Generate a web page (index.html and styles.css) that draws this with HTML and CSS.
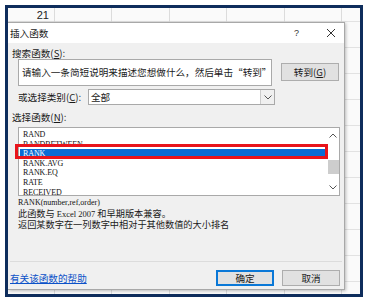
FILE: index.html
```html
<!DOCTYPE html>
<html>
<head>
<meta charset="utf-8">
<link rel="stylesheet" href="styles.css">
</head>
<body>
<div class="frame">
  <div class="toprow"><span class="cellnum">21</span></div>
  <div class="dialog">
    <div class="titlebar">
      <span class="title">插入函数</span>
      <span class="tbtns"><span class="help">?</span><span class="close">
        <svg width="10" height="10" viewBox="0 0 10 10"><path d="M1 1 L9 9 M9 1 L1 9" stroke="#333" stroke-width="1" fill="none"/></svg>
      </span></span>
    </div>
    <div class="body">
      <div class="label">搜索函数(<u>S</u>):</div>
      <div class="searchrow">
        <div class="searchbox">请输入一条简短说明来描述您想做什么，然后单击“转到”</div>
        <div class="btn gobtn">转到(<u>G</u>)</div>
      </div>
      <div class="catrow">
        <span class="catlabel">或选择类别(<u>C</u>):</span>
        <div class="select"><span>全部</span><span class="arrow"><svg width="8" height="5" viewBox="0 0 8 5"><path d="M0.5 0.5 L4 4 L7.5 0.5" stroke="#555" fill="none"/></svg></span></div>
      </div>
      <div class="label label2">选择函数(<u>N</u>):</div>
      <div class="listbox">
        <div class="items">
          <div class="item">RAND</div>
          <div class="item">RANDBETWEEN</div>
          <div class="item sel">RANK</div>
          <div class="item">RANK.AVG</div>
          <div class="item">RANK.EQ</div>
          <div class="item">RATE</div>
          <div class="item">RECEIVED</div>
        </div>
        <div class="scroll">
          <svg width="8" height="5" viewBox="0 0 8 5"><path d="M0.5 4.5 L4 1 L7.5 4.5" stroke="#555" fill="none"/></svg>
          <div class="thumb"></div>
          <svg width="8" height="5" viewBox="0 0 8 5"><path d="M0.5 0.5 L4 4 L7.5 0.5" stroke="#555" fill="none"/></svg>
        </div>
        <div class="redbox"></div>
      </div>
      <div class="syntax">RANK(number,ref,order)</div>
      <div class="desc">此函数与 <span class="lat">Excel 2007</span> 和早期版本兼容。</div>
      <div class="desc">返回某数字在一列数字中相对于其他数值的大小排名</div>
      <div class="sep"></div>
      <div class="footer">
        <a class="link">有关该函数的帮助</a>
        <div class="fbtns">
          <div class="btn okbtn">确定</div>
          <div class="btn">取消</div>
        </div>
      </div>
    </div>
  </div>
</div>
</body>
</html>
```
FILE: styles.css
```css
html, body { margin: 0; padding: 0; background: #fff; }
body {
  width: 368px; height: 307px; overflow: hidden;
  font-family: "Noto Sans CJK SC", "Noto Sans", sans-serif;
  font-size: 9.6px; color: #1a1a1a;
}
.frame {
  margin: 5px 0 0 5px;
  width: 352px; height: 286px;
  border: 3px solid #0e2d5c;
  background-color: #fafafa;
  background-image:
    repeating-linear-gradient(90deg, transparent 0, transparent 46px, #dcdcdc 46px, #dcdcdc 47px, transparent 47px, transparent 57.5px),
    repeating-linear-gradient(180deg, transparent 0, transparent 13px, #e2e2e2 13px, #e2e2e2 14px, transparent 14px, transparent 26px);
  display: flex; flex-direction: column;
  overflow: hidden;
}
.toprow { height: 14px; position: relative; }
.cellnum {
  display: block; width: 41px; text-align: right;
  font-family: "Liberation Sans", sans-serif; font-size: 11px; line-height: 14px; color: #222;
}
.dialog {
  width: 336px; height: 266px;
  border: 1px solid #a8a8a8;
  border-left: none;
  background: #f0f0f0;
  box-shadow: 1px 1px 3px rgba(0,0,0,0.25);
  display: flex; flex-direction: column;
  overflow: hidden;
}
.titlebar {
  height: 20px; background: #fff; flex: none;
  display: flex; align-items: center; justify-content: space-between;
  padding: 0 0 0 2px;
}
.title { font-size: 9.6px; }
.tbtns { display: flex; align-items: center; }
.help { font-family: "Liberation Sans", sans-serif; font-size: 9px; margin-right: 27px; color: #333; }
.close { width: 10px; height: 10px; margin-right: 8px; display: flex; }
.body { padding: 0 0 0 4px; flex: 1; display: flex; flex-direction: column; }
.label { height: 12px; line-height: 12px; margin-top: 4px; }
.searchrow { display: flex; margin-top: 0; margin-left: 6px; align-items: flex-start; }
.searchbox {
  width: 249px; height: 25px; background: #fff; border: 1px solid #a9a9a9;
  padding: 0 0 0 3px; line-height: 24px; white-space: nowrap; overflow: hidden;
}
.btn {
  width: 56px; height: 14px; border: 1px solid #adadad; background: #e1e1e1;
  text-align: center; line-height: 14px; font-size: 9.6px;
}
.gobtn { margin-left: 9px; margin-top: 4px; height: 16px; line-height: 16px; }
.catrow { display: flex; align-items: center; margin-top: 3px; margin-left: 6px; height: 16px; }
.catlabel { width: 70px; }
.select {
  width: 183px; height: 14px; background: #fff; border: 1px solid #a9a9a9;
  display: flex; align-items: center; justify-content: space-between; padding-left: 2px;
}
.arrow { width: 13px; height: 14px; background: #f0f0f0; border-left: 1px solid #ccc; display: flex; align-items: center; justify-content: center; }
.label2 { margin-top: 6px; }
.listbox {
  margin-top: 4px; margin-left: 6px; flex: none;
  width: 320px; height: 67px; background: #fff; border: 1px solid #a9a9a9;
  position: relative; display: flex;
}
.items { flex: 1; padding-top: 2px; padding-left: 1px; }
.item {
  font-family: "Liberation Serif", serif; font-size: 8px; line-height: 9.6px; height: 9.6px;
  padding-left: 3px; color: #111; letter-spacing: -0.1px;
}
.item.sel { background: #0a6cd4; color: #fff; }
.scroll {
  width: 12px; display: flex; flex-direction: column; align-items: center; padding-top: 5px;
}
.thumb { width: 11px; height: 14px; background: #cdcdcd; margin-top: 22px; margin-bottom: 11px; }
.redbox {
  position: absolute; left: -4px; top: 16px; width: 307px; height: 9px;
  border: 3px solid #e8141b;
}
.syntax { font-family: "Liberation Serif", serif; font-size: 8px; margin-left: 6px; margin-top: 2px; line-height: 10px; color: #111; }
.desc { margin-left: 6px; line-height: 11px; height: 11px; font-size: 9.2px; }
.lat { font-family: "Liberation Serif", serif; font-size: 8.5px; }
.sep { height: 1px; background: #dcdcdc; margin-top: 31px; margin-right: 2px; margin-left: -2px; flex: none; }
.footer { display: flex; justify-content: space-between; align-items: center; margin-top: 8px; margin-left: -2px; }
.link { color: #0c52c8; text-decoration: underline; }
.fbtns { display: flex; gap: 8px; margin-right: 4px; }
.okbtn { border: 1px solid #0a78d7; box-shadow: inset 0 0 0 1px #0a78d7; }
```
